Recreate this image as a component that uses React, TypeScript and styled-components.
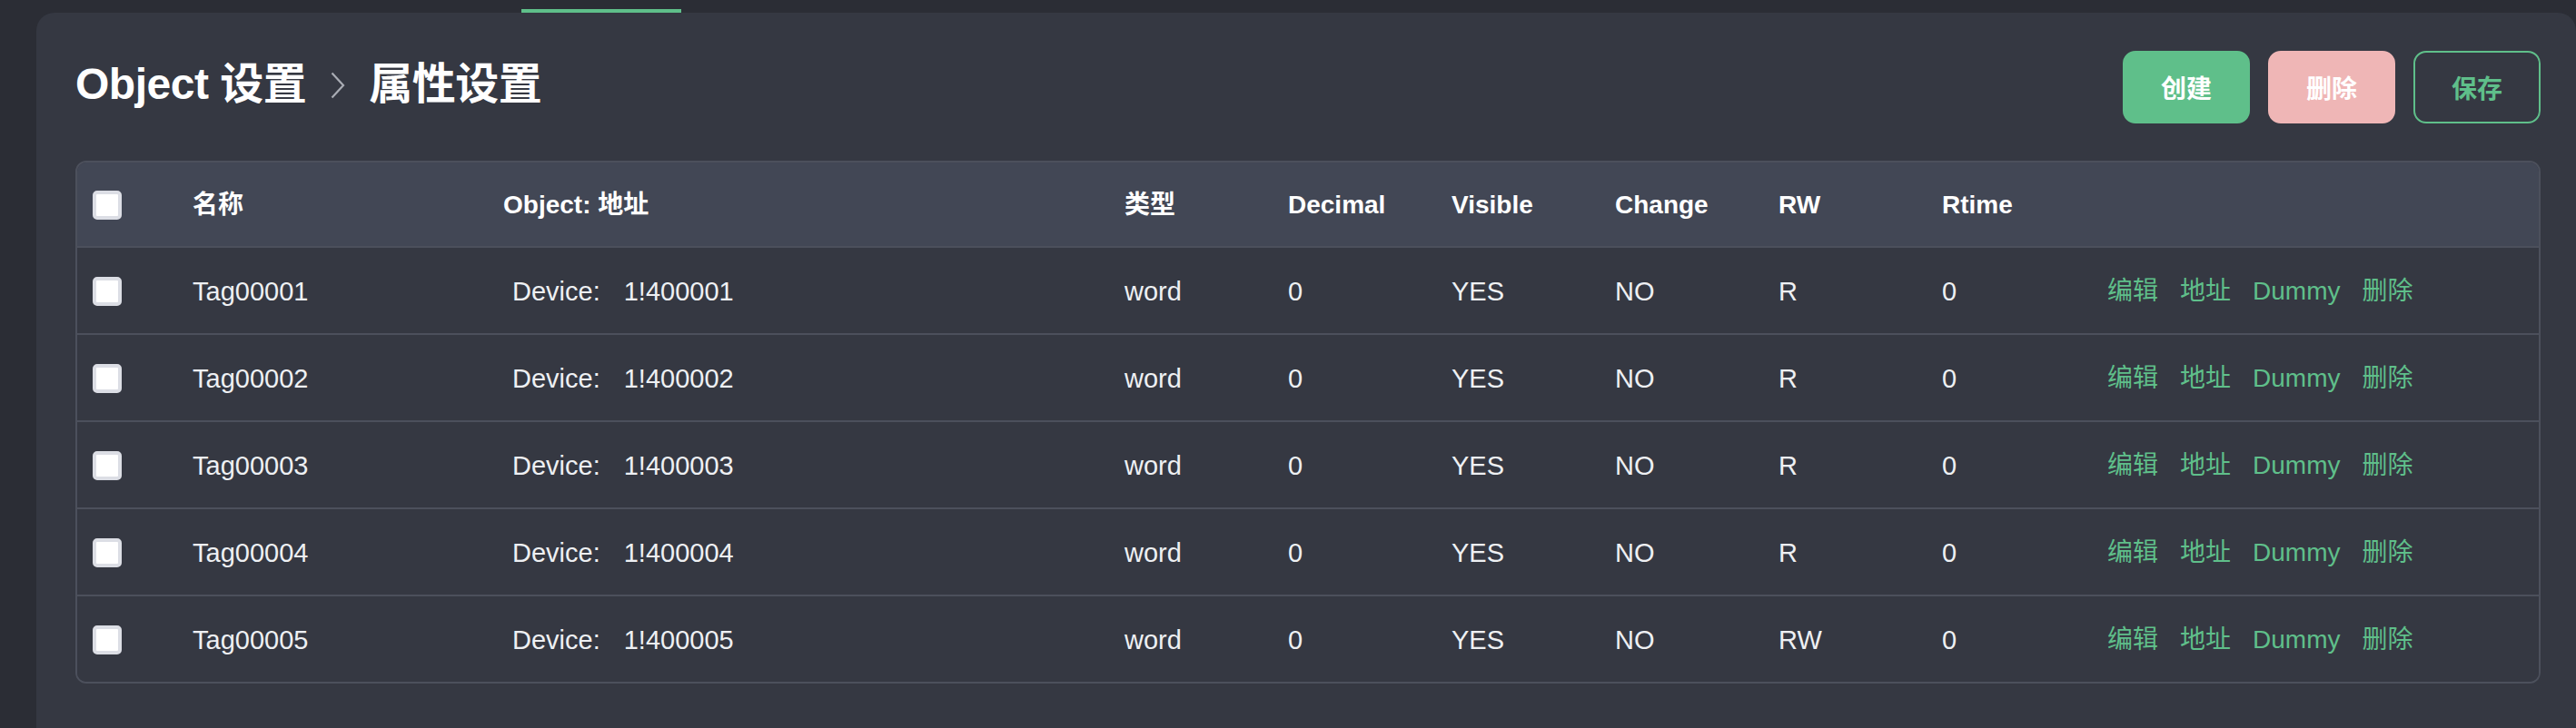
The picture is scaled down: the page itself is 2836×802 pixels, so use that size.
import React from 'react';
import styled, { createGlobalStyle } from 'styled-components';

const GlobalStyle = createGlobalStyle`
  html, body {
    margin: 0;
    padding: 0;
    background: #2b2d35;
  }
  body {
    font-family: 'Liberation Sans', 'Noto Sans CJK SC', sans-serif;
    color: #f2f3f5;
  }
`;

type Tag = {
  name: string;
  address: string;
  type: string;
  decimal: number;
  visible: string;
  change: string;
  rw: string;
  rtime: number;
};

const tags: Array<Tag> = [
  { name: 'Tag00001', address: '1!400001', type: 'word', decimal: 0, visible: 'YES', change: 'NO', rw: 'R', rtime: 0 },
  { name: 'Tag00002', address: '1!400002', type: 'word', decimal: 0, visible: 'YES', change: 'NO', rw: 'R', rtime: 0 },
  { name: 'Tag00003', address: '1!400003', type: 'word', decimal: 0, visible: 'YES', change: 'NO', rw: 'R', rtime: 0 },
  { name: 'Tag00004', address: '1!400004', type: 'word', decimal: 0, visible: 'YES', change: 'NO', rw: 'R', rtime: 0 },
  { name: 'Tag00005', address: '1!400005', type: 'word', decimal: 0, visible: 'YES', change: 'NO', rw: 'RW', rtime: 0 }
];

const Page = styled.div`
  min-height: 802px;
  display: flex;
  flex-direction: column;
  background: #2b2d35;
`;

const TabStrip = styled.div`
  height: 14px;
  display: flex;
  align-items: flex-end;
`;

const TabIndicator = styled.div`
  margin-left: 574px;
  width: 176px;
  height: 4px;
  background: #5fbf8a;
`;

const Card = styled.div`
  flex: 1;
  margin-left: 40px;
  background: #353842;
  border-radius: 20px 20px 0 0;
  padding: 42px 39px 0 43px;
`;

const TitleBar = styled.div`
  display: flex;
  align-items: center;
  justify-content: space-between;
  height: 80px;
  margin-bottom: 41px;
`;

const Breadcrumb = styled.h1`
  display: flex;
  align-items: center;
  margin: 0;
  padding-bottom: 6px;
  font-size: 48px;
  line-height: 60px;
  font-weight: 700;
  color: #ffffff;
  letter-spacing: -0.5px;
`;

const Crumb = styled.span``;

const Separator = styled.span`
  display: flex;
  margin: 2px 26px 0 27px;
`;

const Actions = styled.div`
  display: flex;
  gap: 20px;
`;

const Button = styled.button<{ $variant: 'primary' | 'danger' | 'outline' }>`
  width: 140px;
  height: 80px;
  border-radius: 14px;
  font-family: inherit;
  font-size: 28px;
  font-weight: 600;
  cursor: pointer;
  border: 2px solid
    ${(p) => (p.$variant === 'danger' ? '#efb6b6' : '#5fbf8a')};
  background: ${(p) =>
    p.$variant === 'primary' ? '#5fbf8a' : p.$variant === 'danger' ? '#efb6b6' : 'transparent'};
  color: ${(p) => (p.$variant === 'outline' ? '#5fbf8a' : '#ffffff')};
`;

const Table = styled.div`
  border: 2px solid #4c505c;
  border-radius: 12px;
  overflow: hidden;
`;

const Row = styled.div<{ $head?: boolean }>`
  display: grid;
  grid-template-columns: 127px 342px 684px 180px 180px 180px 180px 180px 182px 1fr;
  align-items: center;
  box-sizing: border-box;
  height: ${(p) => (p.$head ? 92 : 94)}px;
  padding-top: 2px;
  line-height: 40px;
  background: ${(p) => (p.$head ? '#424755' : '#353842')};
  font-size: ${(p) => (p.$head ? 28 : 29)}px;
  font-weight: ${(p) => (p.$head ? 700 : 400)};
  color: ${(p) => (p.$head ? '#ffffff' : '#eef0f3')};
  & + & {
    border-top: 2px solid #4c505c;
    height: 96px;
  }
`;

const CheckCell = styled.div`
  padding-left: 17px;
  display: flex;
  align-items: center;
`;

const Checkbox = styled.span`
  box-sizing: border-box;
  width: 32px;
  height: 32px;
  border: 4px solid #dcdee5;
  border-radius: 5px;
  background: #ffffff;
`;

const Cell = styled.div<{ $indent?: boolean }>`
  white-space: nowrap;
  padding-left: ${(p) => (p.$indent ? 10 : 0)}px;
`;

const Address = styled.span`
  margin-left: 26px;
`;

const LinkGroup = styled.div`
  display: flex;
  align-items: baseline;
  gap: 24px;
`;

const Link = styled.a`
  color: #5fbf8a;
  font-size: 28px;
  line-height: 40px;
  cursor: pointer;
`;

const Chevron = () => (
  <svg width="16" height="30" viewBox="0 0 16 30" fill="none">
    <path d="M1.5 1.5 L14 15 L1.5 28.5" stroke="#a9acb4" strokeWidth="2.2" />
  </svg>
);

const App = () => (
  <Page>
    <GlobalStyle />
    <TabStrip>
      <TabIndicator />
    </TabStrip>
    <Card>
      <TitleBar>
        <Breadcrumb>
          <Crumb>Object 设置</Crumb>
          <Separator>
            <Chevron />
          </Separator>
          <Crumb>属性设置</Crumb>
        </Breadcrumb>
        <Actions>
          <Button $variant="primary">创建</Button>
          <Button $variant="danger">删除</Button>
          <Button $variant="outline">保存</Button>
        </Actions>
      </TitleBar>
      <Table>
        <Row $head>
          <CheckCell>
            <Checkbox />
          </CheckCell>
          <Cell>名称</Cell>
          <Cell>Object: 地址</Cell>
          <Cell>类型</Cell>
          <Cell>Decimal</Cell>
          <Cell>Visible</Cell>
          <Cell>Change</Cell>
          <Cell>RW</Cell>
          <Cell>Rtime</Cell>
          <Cell />
        </Row>
        {tags.map((t) => (
          <Row key={t.name}>
            <CheckCell>
              <Checkbox />
            </CheckCell>
            <Cell>{t.name}</Cell>
            <Cell $indent>
              Device:<Address>{t.address}</Address>
            </Cell>
            <Cell>{t.type}</Cell>
            <Cell>{t.decimal}</Cell>
            <Cell>{t.visible}</Cell>
            <Cell>{t.change}</Cell>
            <Cell>{t.rw}</Cell>
            <Cell>{t.rtime}</Cell>
            <LinkGroup>
              <Link>编辑</Link>
              <Link>地址</Link>
              <Link>Dummy</Link>
              <Link>删除</Link>
            </LinkGroup>
          </Row>
        ))}
      </Table>
    </Card>
  </Page>
);

export default App;
